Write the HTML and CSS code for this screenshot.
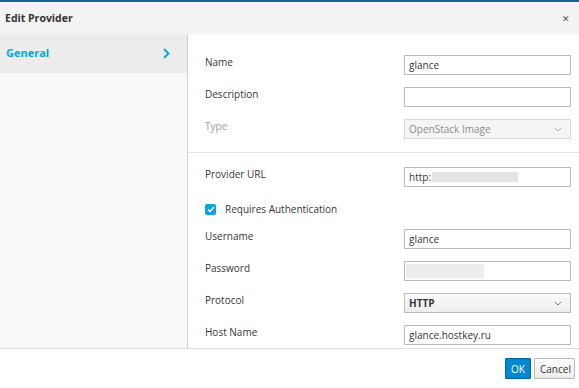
FILE: index.html
```html
<!DOCTYPE html>
<html lang="en">
<head>
  <meta charset="UTF-8">
  <title>Edit Provider</title>
  <link rel="stylesheet" href="styles.css">
</head>
<body>

<div class="topbar"></div>

<div class="modal-header">
  <div class="modal-title">Edit Provider</div>
  <div class="close">&#x2715;</div>
</div>

<div class="modal-body">
  <div class="sidebar">
    <div class="nav-item">
      <span>General</span>
      <svg class="chev" width="7" height="11" viewBox="0 0 7 11"><path d="M1 1l4.5 4.5L1 10" fill="none" stroke="#00a8e1" stroke-width="1.8"/></svg>
    </div>
  </div>

  <div class="content">
    <div class="section">
      <div class="row">
        <div class="label">Name</div>
        <div class="input">glance</div>
      </div>
      <div class="row">
        <div class="label">Description</div>
        <div class="input"></div>
      </div>
      <div class="row">
        <div class="label muted">Type</div>
        <div class="input select disabled">
          <span>OpenStack Image</span>
          <svg width="8" height="5" viewBox="0 0 8 5"><path d="M1 1l3 3 3-3" fill="none" stroke="#aaa" stroke-width="1"/></svg>
        </div>
      </div>
    </div>

    <div class="section second">
      <div class="row">
        <div class="label">Provider URL</div>
        <div class="input">http:<span class="blur url"></span></div>
      </div>
      <div class="row check-row">
        <span class="checkbox">
          <svg width="8" height="7" viewBox="0 0 8 7"><path d="M1 3.5l2 2L7 1" fill="none" stroke="#fff" stroke-width="1.5"/></svg>
        </span>
        <span class="check-label">Requires Authentication</span>
      </div>
      <div class="row">
        <div class="label">Username</div>
        <div class="input">glance</div>
      </div>
      <div class="row">
        <div class="label">Password</div>
        <div class="input"><span class="blur pass"></span></div>
      </div>
      <div class="row">
        <div class="label">Protocol</div>
        <div class="input select button-like">
          <span>HTTP</span>
          <svg width="8" height="5" viewBox="0 0 8 5"><path d="M1 1l3 3 3-3" fill="none" stroke="#777" stroke-width="1"/></svg>
        </div>
      </div>
      <div class="row">
        <div class="label">Host Name</div>
        <div class="input">glance.hostkey.ru</div>
      </div>
    </div>
  </div>
</div>

<div class="modal-footer">
  <button class="btn btn-primary">OK</button>
  <button class="btn btn-default">Cancel</button>
</div>

</body>
</html>
```

FILE: styles.css
```css
body {
  font-family: "Open Sans", "Noto Sans", sans-serif;
  font-size: 10px;
  color: #363636;
  background: #fff;
  margin: 0;
  padding: 0;
  width: 579px;
  height: 388px;
  overflow: hidden;
}
.topbar {
  height: 2px;
  background-color: #0a6a92;
}
.modal-header {
  height: 32px;
  background-color: #f3f3f3;
  display: flex;
  align-items: center;
  justify-content: space-between;
  padding: 0 9px 0 5px;
}
.modal-title {
  font-weight: bold;
  font-size: 10.5px;
  color: #333;
}
.close {
  font-size: 9px;
  color: #555;
}

.modal-body {
  display: flex;
  height: 314px;
  border-bottom: 1px solid #dedede;
}
.sidebar {
  width: 187px;
  background-color: #f9f9f9;
  border-right: 1px solid #d1d1d1;
}
.nav-item {
  height: 39px;
  box-sizing: border-box;
  background-color: #ececec;
  display: flex;
  align-items: center;
  justify-content: space-between;
  padding: 0 17px 3px 6px;
  color: #00a8e1;
  font-weight: bold;
  font-size: 11px;
}
.chev {
  margin-top: 2px;
}

.content {
  flex: 1;
  overflow: hidden;
}
.section {
  padding: 21px 8px 13px 17px;
  display: flex;
  flex-direction: column;
  gap: 12px;
  border-bottom: 1px solid #e2e2e2;
}
.section.second {
  padding-top: 14px;
  border-bottom: none;
}
.row {
  display: flex;
  align-items: flex-start;
  height: 20px;
}
.label {
  width: 199px;
  line-height: 14px;
  color: #363636;
}
.label.muted {
  color: #9c9c9c;
}
.input {
  height: 18px;
  border: 1px solid #bbb;
  background: #fff;
  display: flex;
  align-items: center;
  padding: 0 0 0 4px;
  box-sizing: content-box;
  width: 161px;
  color: #363636;
}
.select {
  justify-content: space-between;
  padding-right: 8px;
  width: 153px;
}
.select.disabled {
  background: #f5f5f5;
  border-color: #d8d8d8;
  color: #8b8d8f;
}
.select.button-like {
  background: linear-gradient(#fafafa, #ededed);
  font-weight: bold;
  color: #363636;
  border-color: #bbb;
}
.blur {
  display: inline-block;
  background: #e4e4e4;
}
.blur.url {
  width: 86px;
  height: 10px;
  margin-left: 1px;
}
.blur.pass {
  width: 78px;
  height: 14px;
  margin-left: -3px;
  background: #ededed;
}

.check-row {
  align-items: center;
  gap: 9px;
  margin-bottom: -2px;
}
.checkbox {
  width: 11px;
  height: 11px;
  border-radius: 2px;
  background: #0fa0dd;
  display: flex;
  align-items: center;
  justify-content: center;
}

.modal-footer {
  height: 39px;
  display: flex;
  align-items: center;
  justify-content: flex-end;
  gap: 3px;
  padding-right: 4px;
}
.btn {
  font-family: "Open Sans", "Noto Sans", sans-serif;
  font-size: 10px;
  height: 21px;
  padding: 0 5px;
  border-radius: 1px;
  cursor: pointer;
}
.btn-primary {
  background: #0088ce;
  border: 1px solid #00659c;
  color: #fff;
  width: 26px;
}
.btn-default {
  background: linear-gradient(#fafafa, #ededed);
  border: 1px solid #bbb;
  color: #363636;
  width: 41px;
}
```
